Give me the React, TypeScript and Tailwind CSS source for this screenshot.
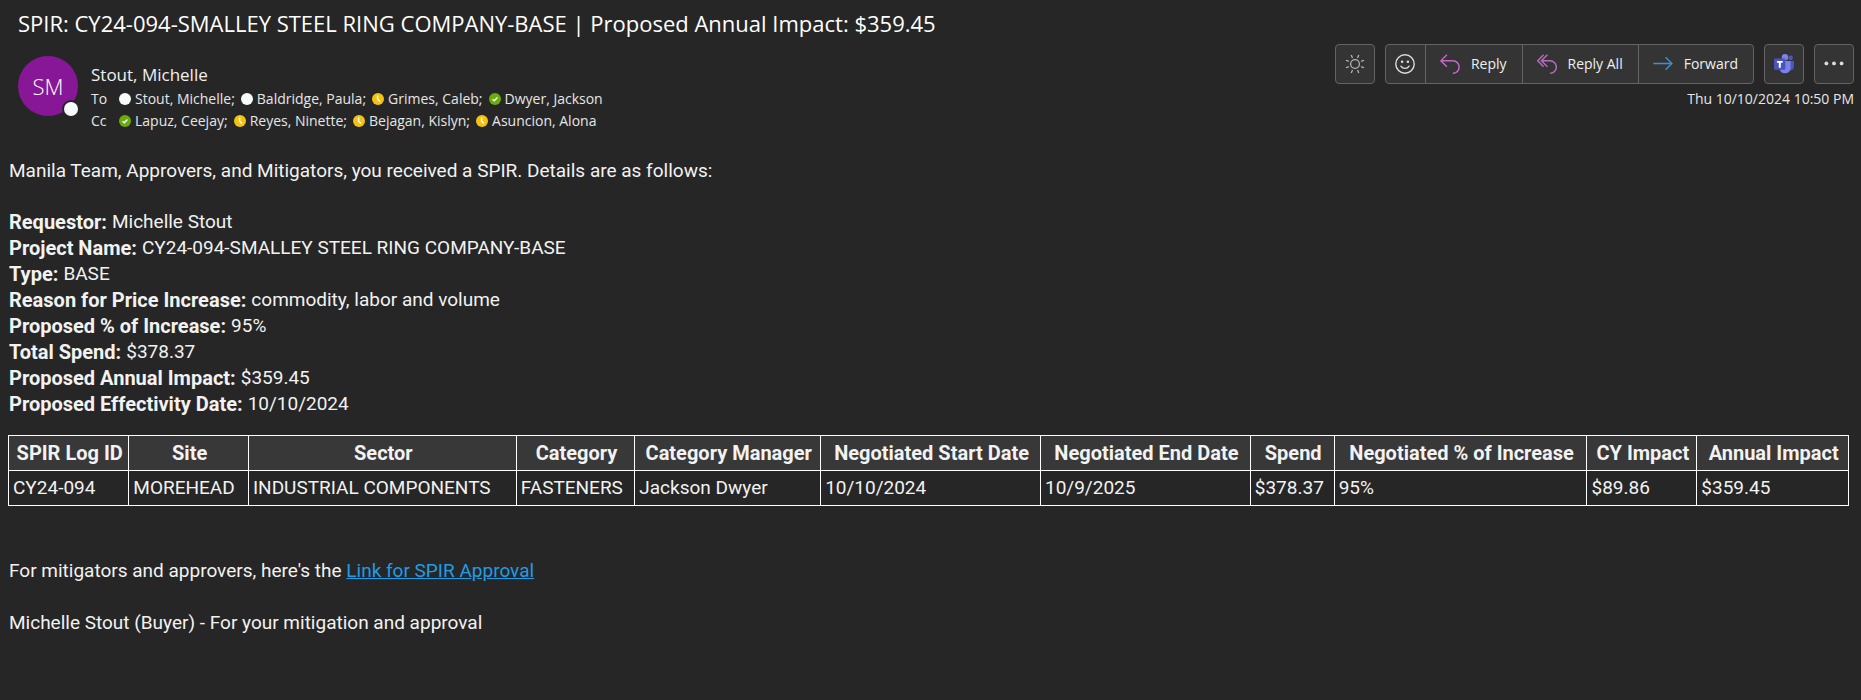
import React from 'react';

type Status = 'offline' | 'away' | 'available';
type Person = { name: string; status: Status };

const toList: Person[] = [
  { name: 'Stout, Michelle', status: 'offline' },
  { name: 'Baldridge, Paula', status: 'offline' },
  { name: 'Grimes, Caleb', status: 'away' },
  { name: 'Dwyer, Jackson', status: 'available' },
];

const ccList: Person[] = [
  { name: 'Lapuz, Ceejay', status: 'available' },
  { name: 'Reyes, Ninette', status: 'away' },
  { name: 'Bejagan, Kislyn', status: 'away' },
  { name: 'Asuncion, Alona', status: 'away' },
];

const details = [
  { label: 'Requestor:', value: 'Michelle Stout' },
  { label: 'Project Name:', value: 'CY24-094-SMALLEY STEEL RING COMPANY-BASE' },
  { label: 'Type:', value: 'BASE' },
  { label: 'Reason for Price Increase:', value: 'commodity, labor and volume' },
  { label: 'Proposed % of Increase:', value: '95%' },
  { label: 'Total Spend:', value: '$378.37' },
  { label: 'Proposed Annual Impact:', value: '$359.45' },
  { label: 'Proposed Effectivity Date:', value: '10/10/2024' },
];

const columns = [
  { title: 'SPIR Log ID', value: 'CY24-094', width: 'w-[6.54%]' },
  { title: 'Site', value: 'MOREHEAD', width: 'w-[6.5%]' },
  { title: 'Sector', value: 'INDUSTRIAL COMPONENTS', width: 'w-[14.56%]' },
  { title: 'Category', value: 'FASTENERS', width: 'w-[6.44%]' },
  { title: 'Category Manager', value: 'Jackson Dwyer', width: 'w-[10.1%]' },
  { title: 'Negotiated Start Date', value: '10/10/2024', width: 'w-[11.95%]' },
  { title: 'Negotiated End Date', value: '10/9/2025', width: 'w-[11.4%]' },
  { title: 'Spend', value: '$378.37', width: 'w-[4.56%]' },
  { title: 'Negotiated % of Increase', value: '95%', width: 'w-[13.74%]' },
  { title: 'CY Impact', value: '$89.86', width: 'w-[5.97%]' },
  { title: 'Annual Impact', value: '$359.45', width: 'w-[8.24%]' },
];

function StatusDot({ status }: { status: Status }) {
  return (
    <svg viewBox="0 0 12 12" className="size-3 shrink-0" fill="none" aria-hidden="true">
      {status === 'offline' && <circle cx="6" cy="6" r="6" fill="#f8fbfb" />}
      {status === 'away' && (
        <>
          <circle cx="6" cy="6" r="6" fill="#f5c211" />
          <path d="M5.6 2.6v3.6l2.4 2.2" stroke="#fff" strokeWidth="1.4" />
        </>
      )}
      {status === 'available' && (
        <>
          <circle cx="6" cy="6" r="6" fill="#6bab0b" />
          <path d="M3.6 6.2l1.7 1.6 3.1-3.3" stroke="#fff" strokeWidth="1.4" />
        </>
      )}
    </svg>
  );
}

function Recipients({ label, people }: { label: string; people: Person[] }) {
  return (
    <div className="flex h-[22px] items-center text-sm text-[#e6e6e6]">
      <span className="w-7">{label}</span>
      <ul className="flex gap-1.5">
        {people.map((p, i) => (
          <li key={p.name} className="flex items-center gap-1 whitespace-nowrap">
            <StatusDot status={p.status} />
            <span>
              {p.name}
              {i < people.length - 1 ? ';' : ''}
            </span>
          </li>
        ))}
      </ul>
    </div>
  );
}

function SunIcon() {
  const rays = [22.5, 67.5, 112.5, 157.5, 202.5, 247.5, 292.5, 337.5];
  return (
    <svg viewBox="0 0 20 20" className="size-5" fill="none" stroke="#b4b4b4" strokeWidth="1.3" aria-hidden="true">
      <circle cx="10" cy="10" r="4.4" />
      {rays.map((a) => (
        <path key={a} d="M10 3.4V.2" transform={`rotate(${a} 10 10)`} />
      ))}
    </svg>
  );
}

function SmileIcon() {
  return (
    <svg viewBox="0 0 20 20" className="size-5" fill="none" stroke="#dcdcdc" strokeWidth="1.4" aria-hidden="true">
      <circle cx="10" cy="10" r="9.2" />
      <circle cx="7.1" cy="7.8" r="1.3" fill="#dcdcdc" stroke="none" />
      <circle cx="12.9" cy="7.8" r="1.3" fill="#dcdcdc" stroke="none" />
      <path d="M5.9 12.2a4.9 4.9 0 0 0 8.2 0" strokeLinecap="round" />
    </svg>
  );
}

function ReplyIcon() {
  return (
    <svg viewBox="0 0 20 20" className="size-5" fill="none" stroke="#c367c6" strokeWidth="1.5" aria-hidden="true">
      <path d="M6.9.8L.9 6.8l6 6M.9 6.8h12a6.2 6.2 0 0 1 0 12.5" />
    </svg>
  );
}

function ReplyAllIcon() {
  return (
    <svg viewBox="0 0 20 20" className="size-5" fill="none" stroke="#b96cc0" strokeWidth="1.4" aria-hidden="true">
      <path d="M6.6.8L.7 6.8l5.9 6M10.4.8L4.4 6.8l6 6M4.4 6.8h8.7a6.2 6.2 0 0 1 0 12.5" />
    </svg>
  );
}

function ForwardIcon() {
  return (
    <svg viewBox="0 0 20 20" className="size-5" fill="none" stroke="#3d90cf" strokeWidth="1.5" aria-hidden="true">
      <path d="M.3 9.5h18.4M12.6 3.3l6.2 6.2-6.2 6.2" />
    </svg>
  );
}

function TeamsIcon() {
  return (
    <svg viewBox="0 0 20 20" className="size-5" aria-hidden="true">
      <circle cx="16.6" cy="3.9" r="2.3" fill="#4a55bd" />
      <path d="M13.5 7h5.3c.7 0 1.2.5 1.2 1.2v4.6a3.8 3.8 0 0 1-6.5 2.6z" fill="#4a55bd" />
      <circle cx="11" cy="3.2" r="3.2" fill="#7b83eb" />
      <path d="M6.4 7h9.2c.6 0 1 .4 1 1v6.2a5.7 5.7 0 0 1-11.3 0V8c0-.6.5-1 1.1-1z" fill="#7b83eb" />
      <rect y="4.4" width="11.4" height="11.4" rx="1.1" fill="#4b53bc" />
      <path d="M2.9 6.9h5.8v1.8H6.8v5H4.8v-5H2.9z" fill="#fff" />
    </svg>
  );
}

function MoreIcon() {
  return (
    <svg viewBox="0 0 20 20" className="size-5" fill="#dcdcdc" aria-hidden="true">
      <circle cx="2.4" cy="9.4" r="1.9" />
      <circle cx="10" cy="9.4" r="1.9" />
      <circle cx="17.6" cy="9.4" r="1.9" />
    </svg>
  );
}

const single =
  'flex size-10 items-center justify-center rounded border border-[#646464] bg-[#343434] hover:bg-[#404040]';
const segment =
  'flex items-center gap-[11px] border-l border-[#646464] pr-[15px] pl-[14px] whitespace-nowrap hover:bg-[#404040]';

function Toolbar() {
  return (
    <div className="flex gap-[10px] text-sm text-[#f0f0f0]">
      <button type="button" aria-label="Toggle background" className={single}>
        <SunIcon />
      </button>
      <div className="flex h-10 overflow-hidden rounded border border-[#646464] bg-[#343434]">
        <button type="button" aria-label="React" className="flex w-[39px] items-center justify-center hover:bg-[#404040]">
          <SmileIcon />
        </button>
        <button type="button" className={segment}>
          <ReplyIcon />
          Reply
        </button>
        <button type="button" className={segment}>
          <ReplyAllIcon />
          Reply All
        </button>
        <button type="button" className={segment}>
          <ForwardIcon />
          Forward
        </button>
      </div>
      <button type="button" aria-label="Share to Teams" className={single}>
        <TeamsIcon />
      </button>
      <button type="button" aria-label="More actions" className={single}>
        <MoreIcon />
      </button>
    </div>
  );
}

export default function App() {
  return (
    <div className="min-h-screen bg-[#262626] text-[#f2f2f2]">
      <header className="pt-[7px] pr-[7px] pl-[18px] font-['Open_Sans',sans-serif]">
        <h1 className="text-[22px] leading-8 text-white">
          SPIR: CY24-094-SMALLEY STEEL RING COMPANY-BASE | Proposed Annual Impact: $359.45
        </h1>
        <div className="flex items-start justify-between pt-[5px]">
          <div className="flex gap-[13px] pt-3">
            <div className="relative flex size-[60px] items-center justify-center rounded-full bg-[#881798] text-[22px] font-light text-white">
              SM
              <span className="absolute -right-0.5 -bottom-0.5 size-[18px] rounded-full border-2 border-[#262626] bg-[#f8fbfb]" />
            </div>
            <div className="pt-[7px]">
              <div className="text-[17px] leading-6 text-[#f0f0f0]">Stout, Michelle</div>
              <div className="pt-px">
                <Recipients label="To" people={toList} />
                <Recipients label="Cc" people={ccList} />
              </div>
            </div>
          </div>
          <div className="flex flex-col items-end">
            <Toolbar />
            <time className="pt-[3px] text-sm leading-6 text-[#e6e6e6]">Thu 10/10/2024 10:50 PM</time>
          </div>
        </div>
      </header>

      <main className="pt-[26px] pr-3 pl-2 font-['Roboto',sans-serif] text-[19px] leading-[26px]">
        <p className="pl-px">Manila Team, Approvers, and Mitigators, you received a SPIR. Details are as follows:</p>
        <dl className="pt-[25px] pl-px">
          {details.map((d) => (
            <div key={d.label} className="flex gap-[5px]">
              <dt className="text-[20px] leading-[26px] font-bold">{d.label}</dt>
              <dd>{d.value}</dd>
            </div>
          ))}
        </dl>
        <table className="mt-[18px] w-full table-fixed border-collapse whitespace-nowrap">
          <thead>
            <tr className="h-[35px] bg-[#383838]">
              {columns.map((c) => (
                <th
                  key={c.title}
                  scope="col"
                  className={`border border-white py-0 pr-0 pl-0.5 text-center text-[20px] leading-[26px] font-bold ${c.width}`}
                >
                  {c.title}
                </th>
              ))}
            </tr>
          </thead>
          <tbody>
            <tr className="h-[35px]">
              {columns.map((c) => (
                <td key={c.title} className="border border-white py-0 pr-0 pl-1">
                  {c.value}
                </td>
              ))}
            </tr>
          </tbody>
        </table>
        <p className="pt-[52px] pl-px">
          For mitigators and approvers, here's the{' '}
          <a href="#spir-approval" className="text-[#1e9de7] underline">
            Link for SPIR Approval
          </a>
        </p>
        <p className="pt-[26px] pl-px">Michelle Stout (Buyer) - For your mitigation and approval</p>
      </main>
    </div>
  );
}
